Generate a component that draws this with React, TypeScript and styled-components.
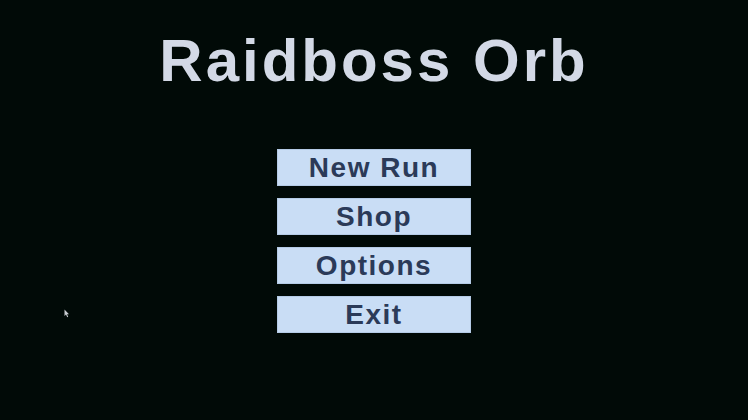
import React from "react";
import styled, { createGlobalStyle } from "styled-components";

const Global = createGlobalStyle`
  html, body { margin: 0; padding: 0; background: #010a07; }
  body { font-family: "Liberation Sans", Arial, sans-serif; }
`;

const Screen = styled.div`
  position: relative;
  width: 748px;
  height: 420px;
  background: #010a07;
  display: flex;
  flex-direction: column;
  align-items: center;
  overflow: hidden;
`;

const Title = styled.h1`
  margin: 28px 0 0;
  font-size: 60px;
  line-height: 66px;
  font-weight: 700;
  letter-spacing: 3px;
  color: #d3d9e6;
  font-family: "Liberation Sans", Arial, sans-serif;
`;

const Menu = styled.nav`
  margin-top: 55px;
  display: flex;
  flex-direction: column;
  gap: 12px;
`;

const MenuButton = styled.button`
  width: 194px;
  height: 37px;
  border: 1px solid #b5cbe6;
  background: #c9ddf5;
  color: #2b3a58;
  font-family: "Liberation Sans", Arial, sans-serif;
  font-size: 28px;
  font-weight: 700;
  letter-spacing: 1.5px;
  padding: 0;
  display: flex;
  align-items: center;
  justify-content: center;
  cursor: pointer;
`;

const Pointer = styled.svg`
  position: absolute;
  left: 64px;
  top: 309px;
`;

const items = ["New Run", "Shop", "Options", "Exit"];

export default function App() {
  return (
    <Screen>
      <Global />
      <Title>Raidboss Orb</Title>
      <Menu>
        {items.map((label) => (
          <MenuButton key={label}>{label}</MenuButton>
        ))}
      </Menu>
      <Pointer width="6" height="9" viewBox="0 0 6 9">
        <path d="M0.5 0.5 L0.5 7 L2 5.6 L3.2 8.3 L4.2 7.8 L3 5.2 L5 5.2 Z" fill="#c9ccd2" />
      </Pointer>
    </Screen>
  );
}
